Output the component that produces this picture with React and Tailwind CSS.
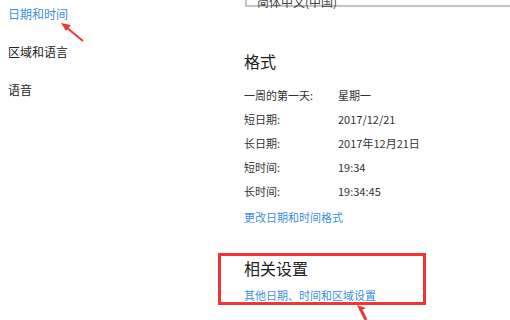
import React from "react";

const rows = [
  ["一周的第一天:", "星期一"],
  ["短日期:", "2017/12/21"],
  ["长日期:", "2017年12月21日"],
  ["短时间:", "19:34"],
  ["长时间:", "19:34:45"],
];

const App = () => {
  return (
    <div
      className="w-[510px] h-[320px] bg-white overflow-hidden flex relative text-[#222]"
      style={{fontFamily: '"Noto Sans CJK SC", "Liberation Sans", sans-serif'}}
    >
      {/* left nav */}
      <div className="w-[218px] shrink-0 pl-[8px] pt-[5px] flex flex-col gap-[20px] text-[12px] leading-[18px]">
        <div className="text-[#3b8fe0]">日期和时间</div>
        <div>区域和语言</div>
        <div>语音</div>
      </div>

      {/* arrow pointing at nav item */}
      <svg className="absolute left-[58px] top-[20px]" width="30" height="24" viewBox="0 0 30 24">
        <line x1="25" y1="21" x2="8" y2="7" stroke="#f03535" strokeWidth="2" />
        <polygon points="3,3 13,5 8,11" fill="#f03535" />
      </svg>

      {/* right content */}
      <div className="flex-1 flex flex-col">
        <div className="ml-[27px] h-[12px] border-l-2 border-b-2 border-[#c4c4c4] pl-[10px] -mt-[5px] text-[12px] leading-[14px] text-[#444]">
          简体中文(中国)
        </div>

        <div className="pl-[26px] mt-[44px] text-[16px] leading-[20px]">格式</div>

        <div className="pl-[26px] mt-[15px] flex flex-col gap-[6px] text-[11px] leading-[18px] text-[#333]">
          {rows.map(([k, v]) => (
            <div key={k} className="flex">
              <div className="w-[94px]">{k}</div>
              <div>{v}</div>
            </div>
          ))}
        </div>

        <div className="pl-[26px] mt-[8px] text-[11px] leading-[18px] text-[#3b8fe0]">更改日期和时间格式</div>

        <div className="mt-[27px] w-[208px] h-[52px] border-[3px] border-[#f03535] pl-[23px] pt-[2px]">
          <div className="text-[16px] leading-[20px]">相关设置</div>
          <div className="mt-[9px] text-[11px] leading-[16px] text-[#3b8fe0]">其他日期、时间和区域设置</div>
        </div>
      </div>

      {/* arrow pointing up at box */}
      <svg className="absolute left-[350px] top-[304px]" width="24" height="16" viewBox="0 0 24 16">
        <polygon points="7,1 16,4 10,7" fill="#f03535" />
        <line x1="10" y1="4" x2="16" y2="16" stroke="#f03535" strokeWidth="3" />
      </svg>
    </div>
  );
};

export default App;
